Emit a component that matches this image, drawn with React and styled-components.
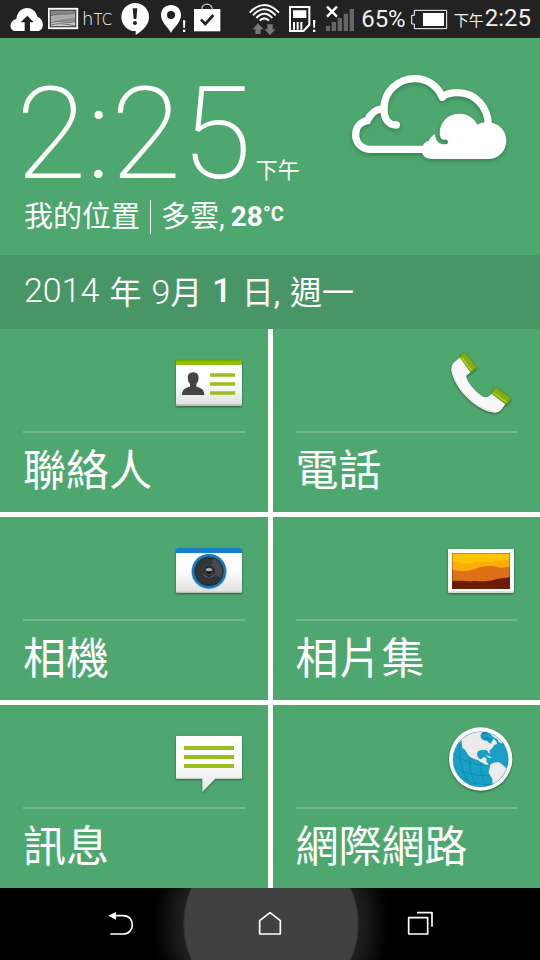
import React from "react";
import styled, { createGlobalStyle } from "styled-components";

const GlobalStyle = createGlobalStyle`
  *, *::before, *::after { box-sizing: border-box; }
  body {
    margin: 0;
    background: #000;
    color: #fff;
    font-family: Roboto, "Noto Sans CJK TC", sans-serif;
  }
`;

const Screen = styled.div`
  display: flex;
  flex-direction: column;
  min-height: 100vh;
  background: #4fa770;
`;

const StatusBar = styled.header`
  display: flex;
  justify-content: space-between;
  align-items: center;
  height: 38px;
  padding: 0 9px 0 10px;
  background: #222;
`;

const StatusGroup = styled.div`
  display: flex;
  align-items: center;
  svg { display: block; flex: none; }
`;

const StatusText = styled.span`
  font-size: ${(p) => (p.$small ? 15 : 24)}px;
  line-height: 38px;
  color: #eee;
  white-space: nowrap;
`;

const StatusTime = styled.time`
  display: flex;
  align-items: baseline;
  gap: 1px;
`;

const Brand = styled.span`
  width: 40px;
  padding-left: 1px;
  font-family: "DejaVu Sans", sans-serif;
  font-weight: 200;
  font-size: 18px;
  line-height: 38px;
  small { font-size: 15px; }
`;

const Weather = styled.section`
  display: flex;
  flex-direction: column;
  gap: 4px;
  height: 217px;
  padding: 34px 30px 0 16px;
`;

const WeatherTop = styled.div`
  display: flex;
  justify-content: space-between;
  align-items: flex-start;
  svg { display: block; filter: drop-shadow(0 2px 2px rgba(0, 60, 20, 0.35)); }
`;

const Clock = styled.time`
  display: flex;
  align-items: baseline;
  gap: 4px;
`;

const ClockDigits = styled.span`
  font-size: 128px;
  font-weight: 200;
  line-height: 124px;
`;

const ClockPeriod = styled.span`
  font-size: 22px;
  font-weight: 400;
  line-height: 24px;
`;

const Conditions = styled.p`
  display: flex;
  align-items: center;
  margin: 0;
  padding-left: 8px;
  font-size: 29px;
  line-height: 34px;
`;

const Place = styled.span`
  padding-right: 10px;
  border-right: 1px solid #fff;
  margin-right: 10px;
`;

const Temperature = styled.strong`
  display: flex;
  align-items: flex-start;
  margin-left: 6px;
  font-size: 28px;
  font-weight: 700;
`;

const Unit = styled.span`
  font-size: 20px;
  line-height: 28px;
`;

const DateBar = styled.time`
  display: flex;
  align-items: center;
  gap: 10px;
  height: 74px;
  padding: 0 24px 4px;
  background: #489566;
  font-size: 32px;
  white-space: nowrap;
`;

const DateNumber = styled.span`
  font-size: 34px;
  font-weight: ${(p) => (p.$strong ? 500 : 300)};
`;

const Tiles = styled.nav`
  flex: 1;
  display: grid;
  grid-template-columns: 1fr 1fr;
  grid-auto-rows: minmax(183px, 1fr);
  gap: 5px;
  background: #fff;
`;

const Tile = styled.a`
  display: flex;
  flex-direction: column;
  padding: 0 23px;
  background: #4fa770;
  color: #fff;
  text-decoration: none;
`;

const TileArt = styled.span`
  display: flex;
  justify-content: flex-end;
  align-items: flex-end;
  height: 104px;
  padding-bottom: 8px;
  border-bottom: 2px solid #74b98d;
  svg { display: block; filter: drop-shadow(0 1px 1px rgba(0, 0, 0, 0.45)); }
`;

const TileLabel = styled.span`
  font-size: 43px;
  line-height: 76px;
`;

const NavBar = styled.footer`
  display: grid;
  grid-template-columns: repeat(3, 150px);
  justify-content: center;
  height: 72px;
  background: radial-gradient(circle at calc(50% + 1px) 36px, #414141 86px, #363636 87px, #202020 88px, #000 118px);
`;

const NavButton = styled.button`
  display: grid;
  place-items: center;
  padding: 0;
  border: 0;
  background: none;
  color: #fff;
  svg { display: block; }
`;

function StatusIcon({ x, width, children }) {
  return (
    <svg width={width} height="38" viewBox={`${x * 3} 0 ${width * 3} 114`} fill="#fff" aria-hidden="true">
      {children}
    </svg>
  );
}

function TileIcon({ x, y, children }) {
  return (
    <svg width="72" height="72" viewBox={`${x} ${y} 216 216`} aria-hidden="true">
      <defs>
        <linearGradient id="paper" x1="0" y1="0" x2="0" y2="1">
          <stop offset="0" stopColor="#fff" />
          <stop offset="0.5" stopColor="#fdfdfd" />
          <stop offset="1" stopColor="#e2e2e4" />
        </linearGradient>
      </defs>
      {children}
    </svg>
  );
}

function CloudIcon() {
  return (
    <svg width="160" height="92" viewBox="30 36 480 276" role="img" aria-label="多雲">
      <g fill="none" stroke="#fff" strokeWidth="22">
        <path d="M169 195C145 195 132 176 132 146C132 94 174 56 225 56C263 56 294 79 307 112" strokeLinecap="round" />
        <path d="M303 112C318 102 335 98 352 98C406 98 445 142 445 196" />
        <path d="M128 146C106 149 90 163 82 182C60 186 47 203 47 224C47 251 67 268 92 268H256" />
      </g>
      <path
        fill="#fff"
        d="M275 297C256 297 245 285 245 270C245 256 254 246 266 242C270 234 277 227 285 222C286 241 296 253 312 253H317A7 7 0 0 0 317 239H313C303 239 299 229 299 218C300 185 325 161 358 161C383 161 404 175 412 194C420 189 431 187 442 187C474 187 499 211 499 242C499 273 475 297 445 297Z"
      />
    </svg>
  );
}

const ContactsIcon = () => (
  <TileIcon x={39} y={33}>
    <rect x="48" y="60" width="198" height="138" rx="3" fill="#bfc3bf" />
    <rect x="48" y="60" width="198" height="132" rx="3" fill="url(#paper)" />
    <path d="M48 75V63q0-3 3-3H243q3 0 3 3V75Z" fill="#93bd08" />
    <path d="M48 61H246" stroke="#7da10c" strokeWidth="3" />
    <path d="M66 165C67 150 72 144 90 140V131C83 125 82 112 85 104C89 94 110 94 114 104C117 112 116 125 109 131V140C127 144 132 150 133 165Z" fill="#444" />
    <path d="M150 105H225M150 132H225M150 159H225" stroke="#97bf1d" strokeWidth="11" />
  </TileIcon>
);

const PhoneIcon = () => (
  <TileIcon x={45} y={33}>
    <path d="M90 52L123 96L109 107C108 125 145 166 166 172Q177 173 184 160L226 192L213 211Q203 221 185 217C132 205 74 145 65 95Q61 80 71 68Z" fill="#f8f8f8" />
    <path d="M65 88C76 145 132 202 190 215" fill="none" stroke="#ddd" strokeWidth="3" />
    <path d="M89 50L100 40Q105 38 109 43L138 79Q140 83 136 87L123 98Z" fill="#83ad0d" stroke="#638a13" strokeWidth="2" />
    <path d="M184 160L192 146Q196 142 202 145L240 172Q244 176 241 181L230 194Z" fill="#83ad0d" stroke="#638a13" strokeWidth="2" />
    <path d="M94 52L124 91M189 158L229 186" stroke="#a8ca2d" strokeWidth="5" />
  </TileIcon>
);

const CameraIcon = () => (
  <TileIcon x={39} y={27}>
    <rect x="48" y="54" width="198" height="135" rx="3" fill="#b9bdbb" />
    <rect x="48" y="54" width="198" height="131" rx="3" fill="url(#paper)" />
    <path d="M48 69V56q0-2 3-2H243q3 0 3 2V69Z" fill="#1680d0" />
    <circle cx="147" cy="126" r="54" fill="#d5dadd" />
    <circle cx="147" cy="124" r="52" fill="#1879bd" />
    <circle cx="147" cy="124" r="43" fill="#333436" />
    <path d="M147 124L162 84A43 43 0 0 1 184 145Z" fill="#4a4b4d" />
    <circle cx="147" cy="124" r="42" fill="none" stroke="#27343e" strokeWidth="4" />
    <circle cx="147" cy="124" r="19" fill="#292929" stroke="#555" strokeWidth="2" />
    <circle cx="147" cy="124" r="10" fill="#111" stroke="#777" strokeWidth="2" />
    <ellipse cx="147" cy="119" rx="9" ry="5" fill="#aaa" />
    <path d="M132 132Q136 140 142 141M162 132Q158 140 152 141" fill="none" stroke="#888" strokeWidth="2" />
  </TileIcon>
);

const GalleryIcon = () => (
  <TileIcon x={45} y={27}>
    <rect x="54" y="57" width="198" height="132" rx="3" fill="#d8d8d8" />
    <rect x="54" y="57" width="198" height="127" rx="3" fill="#fff" />
    <rect x="66" y="69" width="174" height="108" fill="#ffc500" />
    <path d="M66 92C90 98 112 104 136 96C160 96 178 100 202 92L240 88V177H66Z" fill="#ffac09" />
    <path d="M66 119C90 124 114 126 138 116C162 105 190 106 210 113L240 110V177H66Z" fill="#dd7118" />
    <path d="M66 153C94 150 112 155 138 153C164 155 180 153 202 146L240 142V177H66Z" fill="#6d1c03" />
    <rect x="67" y="70" width="172" height="106" fill="none" stroke="#5b3105" strokeOpacity="0.55" strokeWidth="2" />
  </TileIcon>
);

const MessagesIcon = () => (
  <TileIcon x={39} y={21}>
    <path d="M50 48H244Q246 48 246 51V173Q246 176 243 176H166L127 216V176H51Q48 176 48 173V51Q48 48 50 48Z" fill="url(#paper)" />
    <path d="M72 84H222M72 111H222M72 138H222" stroke="#97bf1d" strokeWidth="12" />
  </TileIcon>
);

const GlobeIcon = () => (
  <TileIcon x={45} y={36}>
    <defs>
      <clipPath id="sphere">
        <circle cx="152" cy="133" r="83" />
      </clipPath>
    </defs>
    <circle cx="152" cy="132" r="95" fill="#fff" />
    <circle cx="152" cy="133" r="83" fill="#1a9fc5" />
    <g clipPath="url(#sphere)">
      <g fill="none" stroke="#0b86ae" strokeWidth="2">
        <path d="M66 112Q120 165 240 146M72 155Q135 196 224 176M102 190Q140 218 200 205M130 50Q180 85 234 90M94 60Q76 128 112 200M121 122Q114 170 142 216M150 128Q151 180 169 216" />
      </g>
      <g fill="#ecebea">
        <path d="M84 84L95 78L97 98L106 105L112 116L121 127L133 132L144 135L151 141L160 145L168 150L177 148L172 143L168 138L171 134L165 126L158 128L153 133L145 129L141 120L142 111L150 106L161 104L171 106L177 116L180 114L178 107L188 98L192 91L202 86L198 78L192 72L186 78L184 86L177 84L172 78L160 76L153 70L151 60L158 54L172 50L140 44L112 52L92 66Z" />
        <path d="M178 54L190 52L208 62L218 74L215 86L207 82L202 72L190 66Z" />
        <path d="M180 150L190 143L206 141L218 149L227 158L238 164L234 184L214 198L200 211L188 211L187 192L180 181L175 171L179 162Z" />
        <path d="M166 120L178 124L186 128L178 129Z" />
      </g>
      <path d="M154 56L162 48L176 53L168 59ZM160 69L172 65L182 70L172 76Z" fill="#1585a5" />
    </g>
    <circle cx="152" cy="133" r="83" fill="none" stroke="#0f7896" strokeOpacity="0.45" strokeWidth="2" />
  </TileIcon>
);

const apps = [
  { label: "聯絡人", Icon: ContactsIcon },
  { label: "電話", Icon: PhoneIcon },
  { label: "相機", Icon: CameraIcon },
  { label: "相片集", Icon: GalleryIcon },
  { label: "訊息", Icon: MessagesIcon },
  { label: "網際網路", Icon: GlobeIcon },
];

function StatusIcons() {
  return (
    <StatusGroup>
      <StatusIcon x={10} width={38}>
        <path fillRule="evenodd" d="M48 93C25 93 27 62 49 57C53 16 103 13 112 50C134 57 134 93 112 93H90V67H101L82 47L62 67H74V93Z" />
      </StatusIcon>
      <StatusIcon x={48} width={33}>
        <rect x="146" y="26" width="86" height="59" fill="#888" stroke="#fff" strokeWidth="5" />
        <path d="M152 46C176 40 200 43 226 36V56C194 54 174 66 152 66Z" fill="#aaa" />
        <path d="M152 66C180 60 200 68 226 64V79H152Z" fill="#c8c8c8" />
        <path d="M152 47C178 38 198 46 226 38M152 70C178 55 198 76 226 64M152 75Q180 66 226 78" fill="none" stroke="#444" strokeWidth="2" />
        <rect x="151" y="31" width="76" height="49" fill="none" stroke="#333" strokeWidth="2" />
      </StatusIcon>
      <Brand>h<small>TC</small></Brand>
      <StatusIcon x={121} width={39}>
        <path fillRule="evenodd" d="M405 9A42 42 0 0 1 447 51C447 74 430 91 407 105V93A42 42 0 0 1 405 9ZM398 25L401 57H409L412 25ZM405 63A6 6 0 1 0 405 75A6 6 0 1 0 405 63Z" />
      </StatusIcon>
      <StatusIcon x={160} width={33}>
        <path fillRule="evenodd" d="M513 98C503 82 483 66 483 46C483 5 543 5 543 46C543 66 523 82 513 98ZM513 33A12 12 0 1 0 513 57A12 12 0 1 0 513 33Z" />
        <path d="M549 61H556L555 84H550ZM549 89H556V96H549Z" />
      </StatusIcon>
      <StatusIcon x={193} width={30}>
        <path d="M582 27H661V94H582Z" />
        <path d="M605 29C606 7 636 7 637 29" fill="none" stroke="#ccc" strokeWidth="4" />
        <path d="M603 59L616 72L640 45" fill="none" stroke="#222" strokeWidth="8" />
      </StatusIcon>
    </StatusGroup>
  );
}

function StatusReadings() {
  return (
    <StatusGroup>
      <StatusIcon x={7} width={41}>
        <g fill="none" stroke="#fff" strokeWidth="6">
          <path d="M29 38Q73 -8 117 38M39 46Q73 10 107 46M49 54Q73 29 97 54M59 62Q73 48 87 62" />
        </g>
        <path d="M54 70L71 88H62V102H46V88H38ZM90 106L74 88H82V73H98V88H106Z" fill="#777" />
      </StatusIcon>
      <StatusIcon x={48} width={38}>
        <path fillRule="evenodd" d="M147 18H211V76L192 96H147ZM153 24V90H189L205 73V24Z" />
        <path d="M159 31H199V54H159ZM159 66H165V89H159ZM170 66H176V89H170ZM181 66H187V89H181ZM219 60H226L225 83H220ZM219 89H226V96H219Z" />
      </StatusIcon>
      <StatusIcon x={86} width={35}>
        <path d="M258 78H270V93H258ZM275 66H288V93H275ZM293 54H306V93H293ZM311 41H324V93H311ZM329 27H342V93H329Z" fill="#666" />
        <path d="M261 20L291 50M291 20L261 50" stroke="#fff" strokeWidth="7" />
      </StatusIcon>
      <StatusText>65%</StatusText>
      <StatusIcon x={166} width={48}>
        <path d="M523 31H620V86H523V72H515V46H523Z" fill="none" stroke="#fff" strokeWidth="3" />
        <path d="M549 39H612V78H549Z" />
      </StatusIcon>
      <StatusTime dateTime="14:25">
        <StatusText $small>下午</StatusText>
        <StatusText>2:25</StatusText>
      </StatusTime>
    </StatusGroup>
  );
}

export default function App() {
  return (
    <Screen>
      <GlobalStyle />
      <StatusBar>
        <StatusIcons />
        <StatusReadings />
      </StatusBar>
      <Weather>
        <WeatherTop>
          <Clock dateTime="14:25">
            <ClockDigits>2:25</ClockDigits>
            <ClockPeriod>下午</ClockPeriod>
          </Clock>
          <CloudIcon />
        </WeatherTop>
        <Conditions>
          <Place>我的位置</Place>
          <span>多雲,</span>
          <Temperature>
            28<Unit>°C</Unit>
          </Temperature>
        </Conditions>
      </Weather>
      <DateBar dateTime="2014-09-01">
        <DateNumber>2014</DateNumber>
        <span>年</span>
        <span>
          <DateNumber>9</DateNumber>月
        </span>
        <DateNumber $strong>1</DateNumber>
        <span>日,</span>
        <span>週一</span>
      </DateBar>
      <Tiles aria-label="應用程式">
        {apps.map(({ label, Icon }) => (
          <Tile key={label} href="#">
            <TileArt>
              <Icon />
            </TileArt>
            <TileLabel>{label}</TileLabel>
          </Tile>
        ))}
      </Tiles>
      <NavBar>
        <NavButton type="button" aria-label="返回">
          <svg width="30" height="30" viewBox="75 87 90 90" fill="none" stroke="#fff" strokeWidth="5">
            <path d="M103 107H130C166 107 166 162 130 162H91" />
            <path d="M85 107L108 96V119Z" fill="#fff" stroke="none" />
          </svg>
        </NavButton>
        <NavButton type="button" aria-label="主畫面">
          <svg width="30" height="30" viewBox="525 87 90 90" fill="none" stroke="#fff" strokeWidth="5" strokeLinejoin="round">
            <path d="M539 122L570 98L601 122V162H539Z" />
          </svg>
        </NavButton>
        <NavButton type="button" aria-label="最近使用的應用程式">
          <svg width="30" height="30" viewBox="975 87 90 90" fill="none" stroke="#fff" strokeWidth="5" strokeLinejoin="round">
            <path d="M986 113H1043V162H986ZM1011 98H1056V140" />
          </svg>
        </NavButton>
      </NavBar>
    </Screen>
  );
}
